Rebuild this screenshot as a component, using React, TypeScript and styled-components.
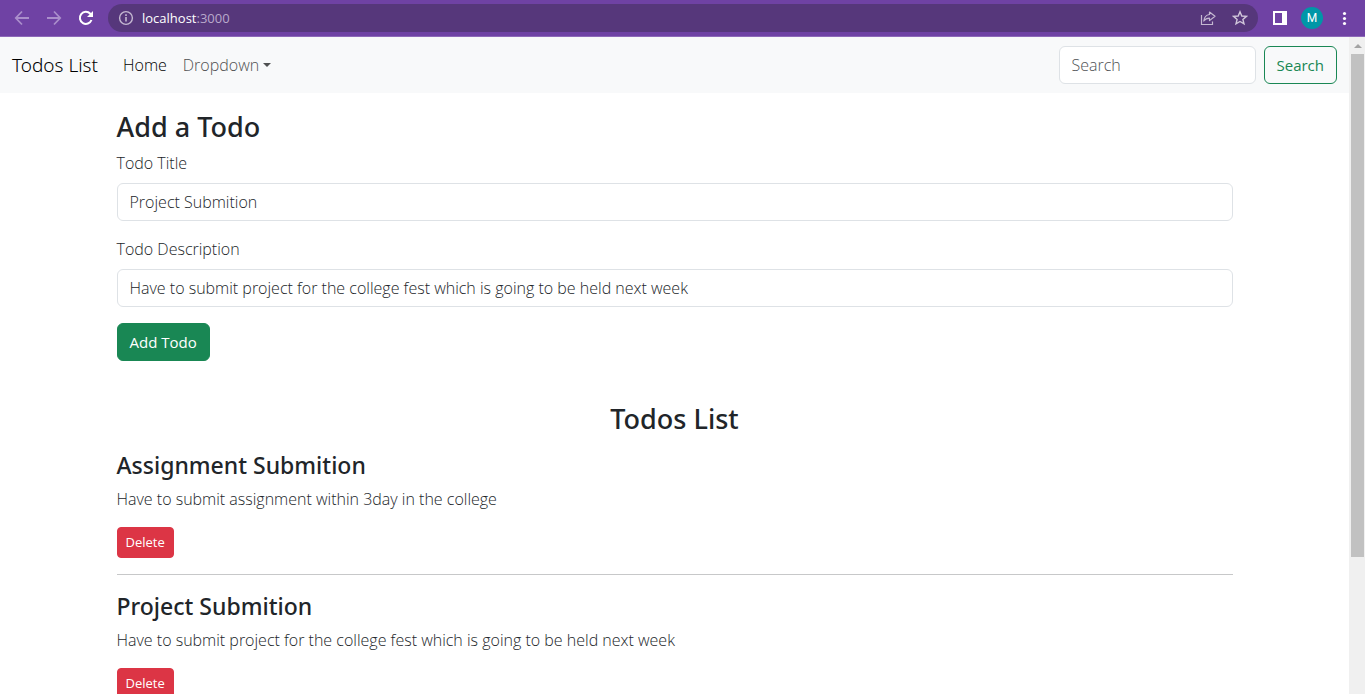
import React, { useState } from "react";
import styled, { createGlobalStyle } from "styled-components";

const GlobalStyle = createGlobalStyle`
  *, *::before, *::after { box-sizing: border-box; }
  body {
    margin: 0;
    background: #fff;
    color: #212529;
    font-family: "Open Sans", "Noto Sans", sans-serif;
    font-size: 16px;
    font-weight: 300;
    line-height: 24px;
  }
  h1, h2, h3, p { margin: 0; }
  button, input { font: inherit; }
`;

const Window = styled.div`
  display: flex;
  flex-direction: column;
  height: 100vh;
  overflow: hidden;
`;

const BrowserBar = styled.header`
  display: flex;
  flex: none;
  align-items: center;
  gap: 8px;
  height: 37px;
  padding: 0 9px 0 8px;
  background: #6f42a4;
  border-bottom: 1px solid #8d69b8;
`;

const ChromeButton = styled.button<{ $dim?: boolean }>`
  display: flex;
  align-items: center;
  justify-content: center;
  width: 24px;
  height: 28px;
  padding: 0;
  border: 0;
  background: none;
  color: ${(p) => (p.$dim ? "#aa8ecb" : "#fff")};
`;

const NavButtons = styled.div`
  display: flex;
  gap: 8px;
  padding: 0 2px;
`;

const AddressBar = styled.div`
  display: flex;
  flex: 1;
  align-items: center;
  gap: 8px;
  height: 28px;
  padding: 0 6px 0 10px;
  border-radius: 14px;
  background: #56377b;
  color: #c4b8d1;
`;

const Address = styled.span`
  flex: 1;
  color: #b9a9cb;
  font-size: 13px;
  font-weight: 400;
  line-height: 20px;
`;

const Host = styled.span`
  color: #fff;
`;

const Avatar = styled.button`
  width: 22px;
  height: 22px;
  padding: 0;
  border: 0;
  border-radius: 50%;
  background: #0097a7;
  color: #fff;
  font-family: Roboto, sans-serif;
  font-size: 12px;
  font-weight: 400;
  line-height: 22px;
`;

const Tools = styled.div`
  display: flex;
  align-items: center;
  gap: 9px;
  padding-left: 2px;
`;

const Viewport = styled.div`
  display: flex;
  flex: 1;
  min-height: 0;
`;

const Page = styled.div`
  flex: 1;
  min-width: 0;
  overflow: hidden;
`;

const Navbar = styled.nav`
  display: flex;
  align-items: center;
  gap: 17px;
  padding: 9px 12px;
  background: #f8f9fa;
`;

const Brand = styled.a`
  color: #000;
  font-family: "Noto Sans", "Open Sans", sans-serif;
  font-size: 19px;
  line-height: 30px;
  text-decoration: none;
`;

const NavLinks = styled.div`
  display: flex;
  flex: 1;
`;

const NavLink = styled.a<{ $active?: boolean }>`
  display: flex;
  align-items: center;
  gap: 4px;
  padding: 7px 8px;
  color: ${(p) => (p.$active ? "#000" : "#4f5051")};
  text-decoration: none;
`;

const Caret = styled.span`
  border: 4px solid transparent;
  border-top-color: currentColor;
  border-bottom: 0;
`;

const SearchForm = styled.form`
  display: flex;
  gap: 8px;
`;

const TextInput = styled.input`
  width: 100%;
  height: 38px;
  padding: 6px 12px;
  border: 1px solid #dee2e6;
  border-radius: 6px;
  background: #fff;
  color: #212529;
  outline: none;
  &::placeholder { color: #4f5255; opacity: 1; }
`;

const SearchInput = styled(TextInput)`
  width: 197px;
`;

const Button = styled.button<{ $kind: "success" | "outline" | "danger" }>`
  padding: ${(p) => (p.$kind === "danger" ? "4px 8px" : "6px 12px")};
  border: 1px solid ${(p) => (p.$kind === "danger" ? "#dc3545" : "#198754")};
  border-radius: ${(p) => (p.$kind === "danger" ? "4px" : "6px")};
  background: ${(p) =>
    ({ success: "#198754", outline: "transparent", danger: "#dc3545" })[p.$kind]};
  color: ${(p) => (p.$kind === "outline" ? "#198754" : "#fff")};
  font-size: ${(p) => (p.$kind === "danger" ? "13px" : "15px")};
  font-weight: 400;
  line-height: ${(p) => (p.$kind === "danger" ? "21px" : "24px")};
`;

const Container = styled.section`
  max-width: 1140px;
  margin: 16px auto 0;
  padding: 0 12px;
`;

const Heading = styled.h2`
  font-family: "Noto Sans", "Open Sans", sans-serif;
  font-size: 27px;
  font-weight: 500;
  line-height: 36px;
`;

const AddForm = styled.form`
  display: flex;
  flex-direction: column;
  align-items: flex-start;
  gap: 16px;
  padding-top: 6px;
`;

const Field = styled.label`
  display: flex;
  flex-direction: column;
  gap: 8px;
  width: 100%;
`;

const TodoList = styled(Container)`
  margin-top: 40px;
`;

const ListHeading = styled(Heading)`
  margin-bottom: 13px;
  text-align: center;
`;

const Todo = styled.article`
  padding-bottom: 16px;
  & + & {
    padding-top: 16px;
    border-top: 1px solid #c7c8c9;
  }
`;

const TodoTitle = styled.h3`
  margin-bottom: 6px;
  font-family: "Noto Sans", "Open Sans", sans-serif;
  font-size: 23px;
  font-weight: 500;
  line-height: 31px;
`;

const TodoText = styled.p`
  margin-bottom: 16px;
`;

const Scrollbar = styled.div`
  display: flex;
  flex: none;
  flex-direction: column;
  align-items: center;
  gap: 6px;
  width: 16px;
  padding: 7px 1px 0 2px;
  background: #f0f0f0;
`;

const ScrollArrow = styled.span`
  border: 4px solid transparent;
  border-top: 0;
  border-bottom-color: #a3a3a3;
`;

const ScrollThumb = styled.div`
  width: 100%;
  height: 77.4%;
  background: #c1c1c1;
`;

const todos = [
  { title: "Assignment Submition", text: "Have to submit assignment within 3day in the college" },
  {
    title: "Project Submition",
    text: "Have to submit project for the college fest which is going to be held next week",
  },
];

function Icon({ size = 16, children }: { size?: number; children: React.ReactNode }) {
  return (
    <svg width={size} height={size} viewBox="0 0 16 16" fill="none" stroke="currentColor" aria-hidden="true">
      {children}
    </svg>
  );
}

function Browser() {
  return (
    <BrowserBar>
      <NavButtons>
        <ChromeButton $dim aria-label="Back">
          <Icon>
            <path d="M15 8H2M8 1.5L1.8 8L8 14.5" strokeWidth="1.8" />
          </Icon>
        </ChromeButton>
        <ChromeButton $dim aria-label="Forward">
          <Icon>
            <path d="M1 8H14M8 1.5L14.2 8L8 14.5" strokeWidth="1.8" />
          </Icon>
        </ChromeButton>
        <ChromeButton aria-label="Reload">
          <Icon>
            <path d="M13.5 10A6 6 0 1 1 12.3 3.8L13.5 5" strokeWidth="2" />
            <path d="M15 1V7H9Z" fill="currentColor" stroke="none" />
          </Icon>
        </ChromeButton>
      </NavButtons>
      <AddressBar>
        <Icon>
          <circle cx="8" cy="8" r="6.4" strokeWidth="1.4" />
          <path d="M8 7V11.5M8 4.3V5.9" strokeWidth="1.6" />
        </Icon>
        <Address>
          <Host>localhost</Host>:3000
        </Address>
        <ChromeButton $dim aria-label="Share">
          <Icon>
            <path d="M1.5 5V14.5H12.5V11.5" stroke="#c4b8d1" strokeWidth="1.2" />
            <path d="M9.5 2L15 6.3L9.5 10.6V8.2C7 8.2 5.2 9 3.8 11C4.2 7.2 6 5 9.5 4.5Z" stroke="#c4b8d1" strokeWidth="1.2" strokeLinejoin="round" />
          </Icon>
        </ChromeButton>
        <ChromeButton $dim aria-label="Bookmark">
          <Icon>
            <path d="M8 1.8L9.8 6L14.4 6.4L10.9 9.4L12 13.9L8 11.5L4 13.9L5.1 9.4L1.6 6.4L6.2 6Z" stroke="#d0c6da" strokeWidth="1.4" />
          </Icon>
        </ChromeButton>
      </AddressBar>
      <Tools>
        <ChromeButton aria-label="Side panel">
          <Icon>
            <path d="M1 1H15V15H1ZM3 3V13H10V3Z" fill="currentColor" fillRule="evenodd" stroke="none" />
          </Icon>
        </ChromeButton>
        <Avatar aria-label="Profile">M</Avatar>
        <ChromeButton aria-label="Menu">
          <Icon>
            <g fill="currentColor" stroke="none">
              <circle cx="8.5" cy="3.5" r="1.6" />
              <circle cx="8.5" cy="8.5" r="1.6" />
              <circle cx="8.5" cy="13.5" r="1.6" />
            </g>
          </Icon>
        </ChromeButton>
      </Tools>
    </BrowserBar>
  );
}

export default function App() {
  const [title, setTitle] = useState("Project Submition");
  const [description, setDescription] = useState(todos[1].text);
  return (
    <>
      <GlobalStyle />
      <Window>
        <Browser />
        <Viewport>
          <Page>
            <Navbar>
              <Brand href="#">Todos List</Brand>
              <NavLinks>
                <NavLink $active href="#">Home</NavLink>
                <NavLink href="#">
                  Dropdown
                  <Caret />
                </NavLink>
              </NavLinks>
              <SearchForm>
                <SearchInput type="search" placeholder="Search" aria-label="Search" />
                <Button $kind="outline" type="button">Search</Button>
              </SearchForm>
            </Navbar>
            <main>
              <Container>
                <Heading>Add a Todo</Heading>
                <AddForm>
                  <Field>
                    Todo Title
                    <TextInput value={title} onChange={(e) => setTitle(e.target.value)} />
                  </Field>
                  <Field>
                    Todo Description
                    <TextInput value={description} onChange={(e) => setDescription(e.target.value)} />
                  </Field>
                  <Button $kind="success" type="button">Add Todo</Button>
                </AddForm>
              </Container>
              <TodoList>
                <ListHeading>Todos List</ListHeading>
                {todos.map((todo) => (
                  <Todo key={todo.title}>
                    <TodoTitle>{todo.title}</TodoTitle>
                    <TodoText>{todo.text}</TodoText>
                    <Button $kind="danger" type="button">Delete</Button>
                  </Todo>
                ))}
              </TodoList>
            </main>
          </Page>
          <Scrollbar aria-hidden="true">
            <ScrollArrow />
            <ScrollThumb />
          </Scrollbar>
        </Viewport>
      </Window>
    </>
  );
}
